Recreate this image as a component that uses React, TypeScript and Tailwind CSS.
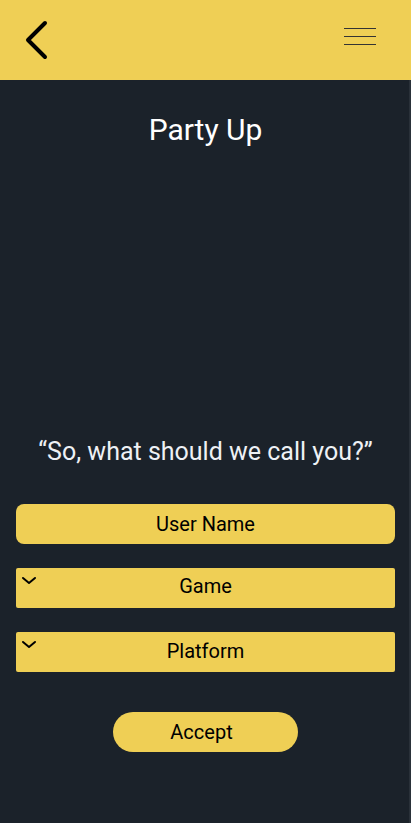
import React from 'react';

const ChevronDown = () => (
  <svg width="16" height="10" viewBox="0 0 16 10" fill="none" className="absolute left-[5px] top-[8px]">
    <path d="M2 2 L8 7 L14 2" stroke="#000" strokeWidth="2" strokeLinecap="round" strokeLinejoin="round" />
  </svg>
);

const App: React.FC = () => {
  return (
    <div className="w-[411px] h-[823px] bg-[#1b222a] flex flex-col font-['Roboto',sans-serif] shadow-[inset_-2px_0_0_#2a3139]">
      {/* Header */}
      <div className="h-[80px] bg-[#efcf55] flex items-center justify-between pl-[24px] pr-[35px]">
        <svg width="26" height="40" viewBox="0 0 26 40" fill="none">
          <path d="M21 3 L4 20 L21 37" stroke="#000" strokeWidth="4" strokeLinecap="round" strokeLinejoin="round" />
        </svg>
        <div className="flex flex-col gap-[7px] w-[32px] mb-[8px]">
          <div className="h-px bg-[#333]" />
          <div className="h-px bg-[#333]" />
          <div className="h-px bg-[#333]" />
        </div>
      </div>

      <h1 className="text-center text-white text-[30px] mt-[31px] leading-[38px]">Party Up</h1>

      <p className="text-center text-[#eef1f5] text-[25px] mt-[288px] leading-[30px]">“So, what should we call you?”</p>

      <div className="flex flex-col gap-[24px] px-[16px] mt-[37px]">
        <div className="h-[40px] bg-[#efcf55] rounded-[8px] flex items-center justify-center text-[20px] text-black">
          User Name
        </div>
        <div className="relative h-[40px] bg-[#efcf55] rounded-[2px] flex items-center justify-center text-[20px] text-black pb-[4px]">
          <ChevronDown />
          Game
        </div>
        <div className="relative h-[40px] bg-[#efcf55] rounded-[2px] flex items-center justify-center text-[20px] text-black pb-[2px]">
          <ChevronDown />
          Platform
        </div>
      </div>

      <div className="flex justify-start pl-[113px] mt-[40px]">
        <button className="w-[185px] h-[40px] bg-[#efcf55] rounded-full text-[20px] text-black pr-[8px]">Accept</button>
      </div>
    </div>
  );
};

export default App;
